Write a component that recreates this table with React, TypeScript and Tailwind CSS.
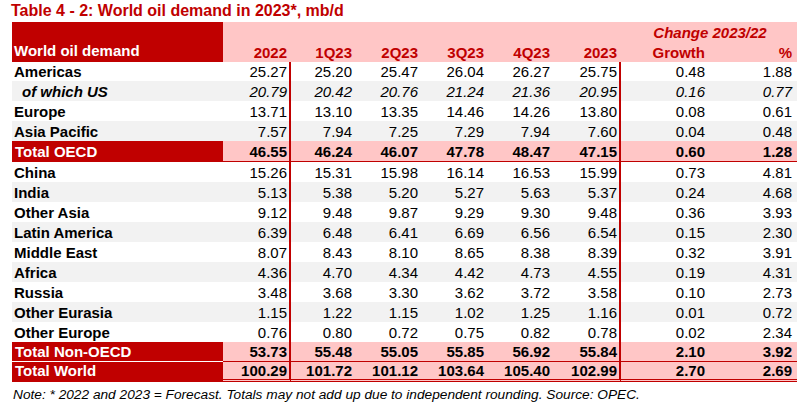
import React from "react";

const RED = "bg-[#C00000]";
const PINK = "bg-[#FFC6C6]";

type Row = {
  label: string;
  v: string[];
  total?: boolean;
  italic?: boolean;
  indent?: boolean;
};

const oecd: Row[] = [
  { label: "Americas", v: ["25.27", "25.20", "25.47", "26.04", "26.27", "25.75", "0.48", "1.88"] },
  { label: "of which US", italic: true, indent: true, v: ["20.79", "20.42", "20.76", "21.24", "21.36", "20.95", "0.16", "0.77"] },
  { label: "Europe", v: ["13.71", "13.10", "13.35", "14.46", "14.26", "13.80", "0.08", "0.61"] },
  { label: "Asia Pacific", v: ["7.57", "7.94", "7.25", "7.29", "7.94", "7.60", "0.04", "0.48"] },
];

const nonOecd: Row[] = [
  { label: "China", v: ["15.26", "15.31", "15.98", "16.14", "16.53", "15.99", "0.73", "4.81"] },
  { label: "India", v: ["5.13", "5.38", "5.20", "5.27", "5.63", "5.37", "0.24", "4.68"] },
  { label: "Other Asia", v: ["9.12", "9.48", "9.87", "9.29", "9.30", "9.48", "0.36", "3.93"] },
  { label: "Latin America", v: ["6.39", "6.48", "6.41", "6.69", "6.56", "6.54", "0.15", "2.30"] },
  { label: "Middle East", v: ["8.07", "8.43", "8.10", "8.65", "8.38", "8.39", "0.32", "3.91"] },
  { label: "Africa", v: ["4.36", "4.70", "4.34", "4.42", "4.73", "4.55", "0.19", "4.31"] },
  { label: "Russia", v: ["3.48", "3.68", "3.30", "3.62", "3.72", "3.58", "0.10", "2.73"] },
  { label: "Other Eurasia", v: ["1.15", "1.22", "1.15", "1.02", "1.25", "1.16", "0.01", "0.72"] },
  { label: "Other Europe", v: ["0.76", "0.80", "0.72", "0.75", "0.82", "0.78", "0.02", "2.34"] },
];

const totalOecd: Row = { label: "Total OECD", total: true, v: ["46.55", "46.24", "46.07", "47.78", "48.47", "47.15", "0.60", "1.28"] };
const totalNon: Row = { label: "Total Non-OECD", total: true, v: ["53.73", "55.48", "55.05", "55.85", "56.92", "55.84", "2.10", "3.92"] };
const totalWorld: Row = { label: "Total World", total: true, v: ["100.29", "101.72", "101.12", "103.64", "105.40", "102.99", "2.70", "2.69"] };

const COLS = "grid grid-cols-[211px_68px_64px_66px_66px_66px_68px_88px_88px]";

// number cells in body rows: red rules after 2022 and 2023
const numCls = [
  "pr-[2px] border-r-2 border-[#C00000]",
  "pr-[3px]",
  "pr-[3px]",
  "pr-[3px]",
  "pr-[3px]",
  "pr-[2px] border-r-2 border-[#C00000]",
  "pr-[4px]",
  "pr-[5px]",
];

const headCls = ["pr-[4px]", "pr-[3px]", "pr-[3px]", "pr-[3px]", "pr-[3px]", "pr-[4px]", "pr-[4px]", "pr-[5px]"];
const years = ["2022", "1Q23", "2Q23", "3Q23", "4Q23", "2023", "Growth", "%"];

function DataRow({ row, gray, rowCls = "h-5", labelBorder = "", numBorder = "" }: {
  row: Row;
  gray?: boolean;
  rowCls?: string;
  labelBorder?: string;
  numBorder?: string;
}) {
  const base = row.total ? PINK : gray ? "bg-[#F2F2F2]" : "bg-white";
  return (
    <div className={`${COLS} ${rowCls}`}>
      <div
        className={`flex items-center font-bold ${row.total ? `${RED} text-white pl-[3px]` : `text-black ${base}`} ${
          row.indent ? "pl-[10px] italic" : !row.total ? "pl-[2px]" : ""
        } ${labelBorder}`}
      >
        {row.label}
      </div>
      {row.v.map((val, i) => (
        <div
          key={i}
          className={`flex items-center justify-end ${base} ${numCls[i]} ${numBorder} ${row.total ? "font-bold" : ""} ${
            row.italic ? "italic" : ""
          }`}
        >
          {val}
        </div>
      ))}
    </div>
  );
}

export default function App() {
  return (
    <div className="w-[806px] h-[409px] bg-white font-['Liberation_Sans',Arial,sans-serif] text-black">
      <div className="pl-[11px] pt-[1px] h-[22px] text-[16px] leading-[20px] font-bold text-[#C00000]">
        Table 4 - 2: World oil demand in 2023*, mb/d
      </div>

      <div className="ml-[12px] w-[785px] text-[15px] leading-none">
        {/* header */}
        <div className="flex h-[40px]">
          <div className={`w-[211px] ${RED} flex items-end pb-[4px] pl-[2px] font-bold text-white`}>
            World oil demand
          </div>
          <div className={`w-[574px] ${PINK} flex flex-col font-bold text-[#C00000]`}>
            <div className="h-5 flex">
              <div className="w-[398px]" />
              <div className="w-[176px] flex items-center justify-center italic pl-[2px]">Change 2023/22</div>
            </div>
            <div className="grid grid-cols-[68px_64px_66px_66px_66px_68px_88px_88px] h-5">
              {years.map((y, i) => (
                <div key={y} className={`flex items-center justify-end ${headCls[i]}`}>
                  {y}
                </div>
              ))}
            </div>
          </div>
        </div>

        {oecd.map((r, i) => (
          <DataRow key={r.label} row={r} gray={i % 2 === 1} rowCls={i === 0 ? "h-[19px]" : "h-5"} />
        ))}
        <DataRow row={totalOecd} rowCls="h-[21px]" labelBorder="border-b border-[#C00000]" numBorder="border-b border-b-[#C00000]" />
        {nonOecd.map((r, i) => (
          <DataRow key={r.label} row={r} gray={i % 2 === 1} />
        ))}
        <DataRow row={totalNon} rowCls="h-5" labelBorder="border-b border-white" numBorder="border-b border-b-[#C00000]" />
        <DataRow
          row={totalWorld}
          rowCls="h-5"
          labelBorder="border-b-[3px] border-double border-[#C00000]"
          numBorder="border-b-[3px] border-double border-b-[#C00000]"
        />
      </div>

      <div className="pl-[13px] pt-[5px] text-[13.7px] leading-[16px] italic">
        Note: * 2022 and 2023 = Forecast. Totals may not add up due to independent rounding. Source: OPEC.
      </div>
    </div>
  );
}
